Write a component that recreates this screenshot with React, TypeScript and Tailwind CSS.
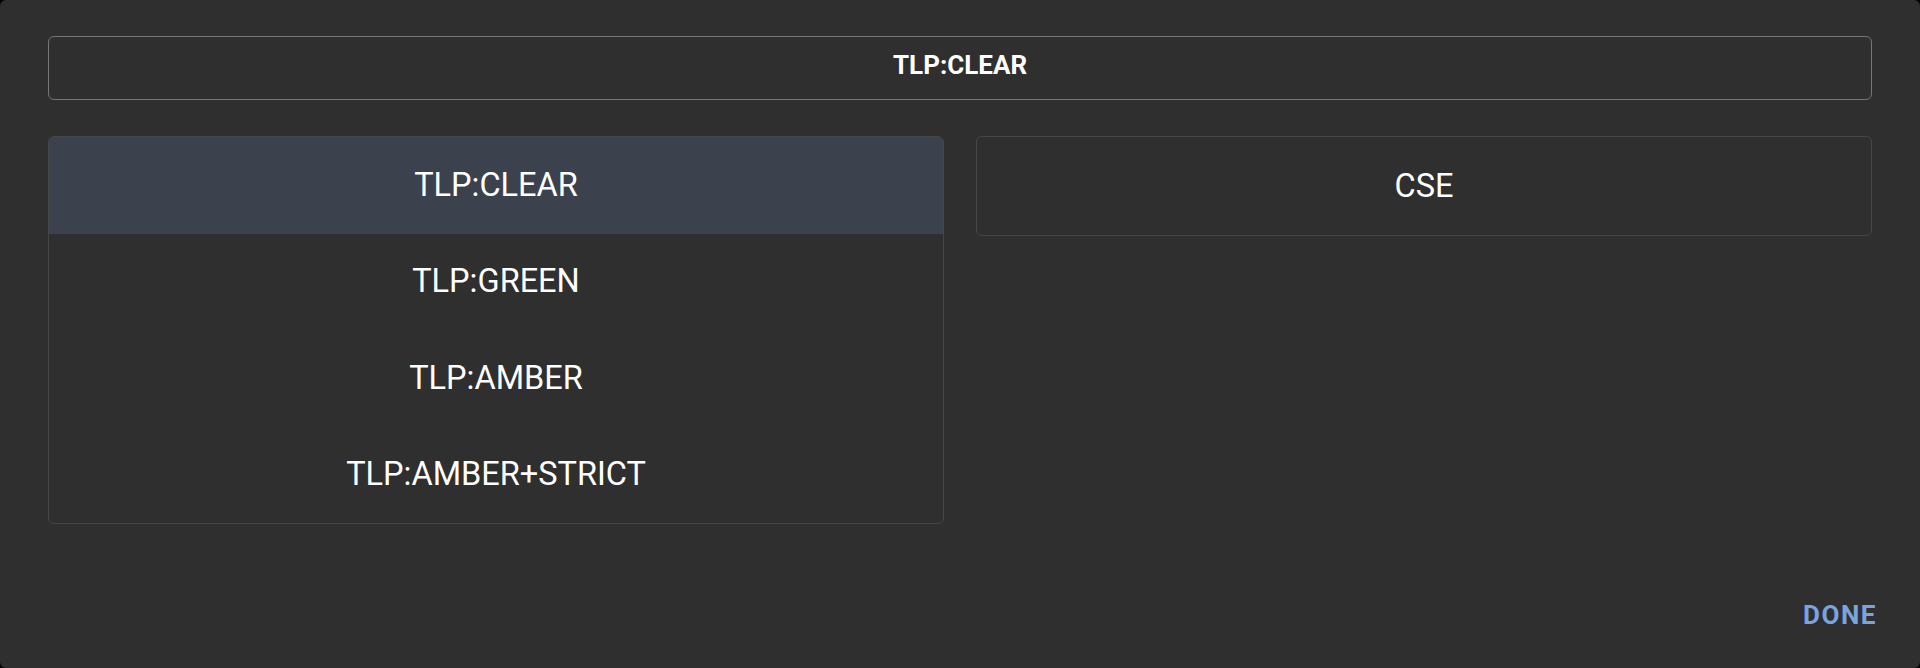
import React, { useState } from 'react';

const levels = ['TLP:CLEAR', 'TLP:GREEN', 'TLP:AMBER', 'TLP:AMBER+STRICT'];
const groups = ['CSE'];

const App: React.FC = () => {
  const [selected, setSelected] = useState('TLP:CLEAR');

  return (
    <div className="w-[1920px] h-[668px] bg-black font-['Roboto','Liberation_Sans',sans-serif]">
      <div className="h-full flex flex-col bg-[#2f2f2f] rounded-[6px] text-white">
        {/* Selected value */}
        <div className="px-12 pt-9">
          <div className="h-16 border border-[#777777] rounded-md flex items-center justify-center pb-1.5 text-[26px] font-bold">
            {selected}
          </div>
        </div>

        {/* Options */}
        <div className="grid grid-cols-2 gap-8 px-12 mt-9 items-start">
          <div className="border border-[#474747] rounded-md overflow-hidden">
            {levels.map((level) => (
              <button
                key={level}
                onClick={() => setSelected(level)}
                className={`w-full h-[96.5px] flex items-center justify-center text-[32.5px] ${
                  level === selected ? 'bg-[#3b424d]' : 'bg-transparent'
                }`}
              >
                {level}
              </button>
            ))}
          </div>
          <div className="border border-[#474747] rounded-md overflow-hidden">
            {groups.map((group) => (
              <button key={group} className="w-full h-[98px] flex items-center justify-center text-[32.5px]">
                {group}
              </button>
            ))}
          </div>
        </div>

        {/* Footer */}
        <div className="mt-auto flex justify-end pr-[43px] pb-[38px]">
          <button className="text-[26px] leading-[30px] font-bold tracking-[0.06em] text-[#7ba3e0]">DONE</button>
        </div>
      </div>
    </div>
  );
};

export default App;
